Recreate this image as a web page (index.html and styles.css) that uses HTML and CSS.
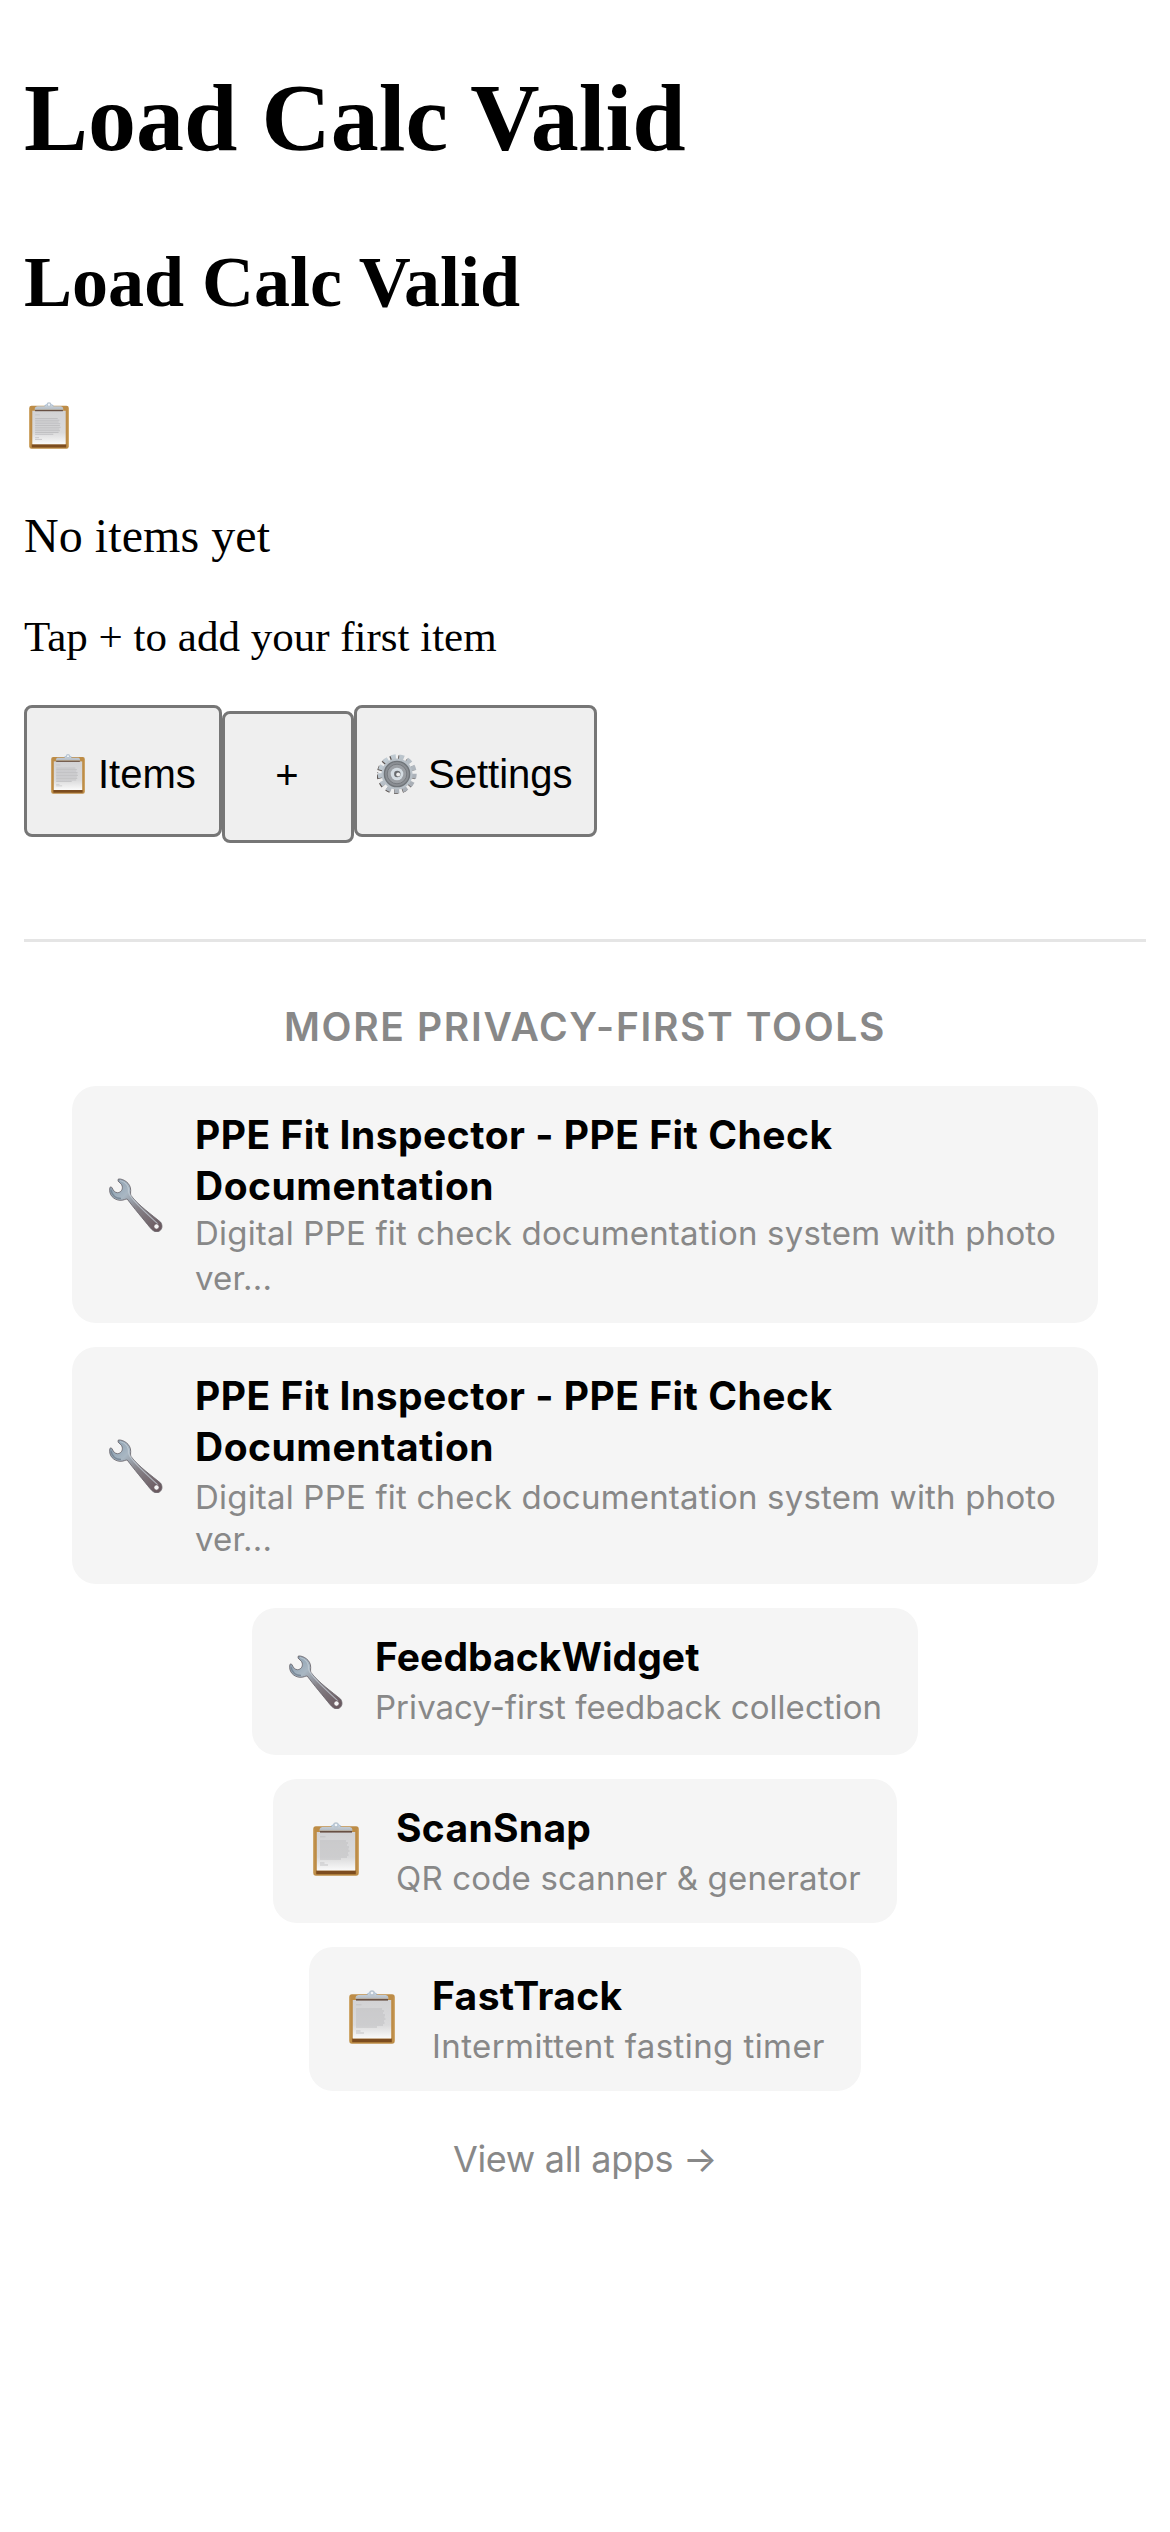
FILE: index.html
```html
<!DOCTYPE html>
<html lang="en">
<head>
<meta charset="utf-8">
<title>Load Calc Valid</title>
<link rel="stylesheet" href="styles.css">
</head>
<body>
<svg class="sprite" aria-hidden="true">
  <defs>
    <linearGradient id="paper" x1="0" y1="0" x2="0" y2="1"><stop offset="0" stop-color="#d2d2d4"/><stop offset=".65" stop-color="#dadadb"/><stop offset="1" stop-color="#fafafa"/></linearGradient>
    <linearGradient id="clip" x1="0" y1="0" x2="0" y2="1"><stop offset="0" stop-color="#c9d3dc"/><stop offset="1" stop-color="#b3bac2"/></linearGradient>
    <linearGradient id="steel" x1="0" y1="0" x2="1" y2="1"><stop offset="0" stop-color="#8499ab"/><stop offset=".3" stop-color="#a9b7c3"/><stop offset=".55" stop-color="#858187"/><stop offset="1" stop-color="#67545a"/></linearGradient>
    <linearGradient id="cog" x1="0" y1="0" x2="1" y2="1"><stop offset="0" stop-color="#c5d1d9"/><stop offset="1" stop-color="#a5a9b0"/></linearGradient>
    <symbol id="clipboard" viewBox="0 0 46 54" preserveAspectRatio="none">
      <rect x=".3" y="4.2" width="45.4" height="49.5" rx="2.6" fill="#bd8c46"/>
      <path d="M.8 7v44M45.2 7v44" stroke="#d0a562" stroke-width=".8"/>
      <path d="M3.2 48.6h39.6v3.6H3.2z" fill="#7c4c1f"/>
      <path d="M3.8 10h38.4v38.6H3.8z" fill="url(#paper)"/>
      <path d="M7 14.8h5.5M7 41h4.5M7 43h8" stroke="#c3c3c5" stroke-width="1"/>
      <path d="M7 19h26M7 21h28M7 23h27M7 25h29M7 27h28.5M7 29h29.5M7 31h28M7 33h28.5M7 35h27M7 37h21" stroke="#c0c0c2" stroke-width="1.2"/>
      <path d="M7 9.8h32" stroke="#685044" stroke-width="1.6"/>
      <path d="M6.500 8.800C6.500 5.700 8 5 10 5h8l2-1.500h6L28 5h8c2 0 3.500.7 3.500 3.800z" fill="url(#clip)"/>
      <circle cx="23" cy="3" r="2.1" fill="#f2f5f8" stroke="#b8c4d0" stroke-width="1.500"/>
      <path d="M18 4.600l2-2M28 4.600l-2-2" stroke="#83a9d2" stroke-width="1"/>
    </symbol>
    <symbol id="wrench" viewBox="0 0 54 54">
      <path d="M9.300 1C14 .4 22 5 21.700 12.500C21.600 14.500 21.300 16 22 17.500C29 27 43 37 51.500 44C54 47.500 53.300 52 49.500 53.500C46 54.500 43.500 52.500 41 49.500C35 42 24 29 18.200 21C16.500 20.800 15 22.500 11 22.300C5 22-.5 17 .8 10C1 8.500 2.500 8.500 3.200 10C4.500 13 6 14.500 8.500 14.700C12 14.500 14 11.500 13.200 8C12.500 5.500 10 4.500 9 3Z" fill="url(#steel)" stroke="#656066" stroke-width=".8"/>
      <path d="M11 2.500C17 4 20 8 19.500 14C21 20 34 32 49 46" fill="none" stroke="#c3ccd4" stroke-width="1.100" opacity=".75"/>
      <path d="M2 12C3 17 6 20.500 12 20.500" fill="none" stroke="#70808e" stroke-width="1.300" opacity=".8"/>
      <circle cx="47.500" cy="48.500" r="2.700" fill="#f5f5f5" stroke="#5b4a50" stroke-width=".8"/>
    </symbol>
    <symbol id="gear" viewBox="0 0 40 40">
      <circle cx="19.200" cy="20.600" r="17" fill="none" stroke="#5d5552" stroke-width="4.800" pathLength="26" stroke-dasharray="1 1"/>
      <circle cx="20.200" cy="19.800" r="17" fill="none" stroke="url(#cog)" stroke-width="5" pathLength="26" stroke-dasharray="1.150 .85"/>
      <circle cx="20" cy="20" r="15.500" fill="#b8c0c7"/>
      <circle cx="20" cy="20" r="12.600" fill="#8b8f94" stroke="#70757a" stroke-width="1.400"/>
      <circle cx="20" cy="20" r="9.800" fill="#9b9fa4" stroke="#777b80" stroke-width="1"/>
      <circle cx="20" cy="20" r="6.300" fill="#d4dce2"/>
      <circle cx="20.300" cy="20" r="3.200" fill="#686a6e"/>
      <circle cx="21.200" cy="20.400" r="2" fill="#eee"/>
    </symbol>
  </defs>
</svg>

<h1 class="app-title">Load Calc Valid</h1>
<h2 class="view-title">Load Calc Valid</h2>
<svg class="empty-icon"><use href="#clipboard"/></svg>
<p class="empty-title">No items yet</p>
<p class="empty-hint">Tap + to add your first item</p>

<nav class="tabs">
  <button class="tab tab-items"><svg class="tab-clipboard"><use href="#clipboard"/></svg>Items</button>
  <button class="tab tab-add">+</button>
  <button class="tab tab-settings"><svg class="tab-gear"><use href="#gear"/></svg>Settings</button>
</nav>

<footer class="more">
  <h3 class="more-title">MORE PRIVACY-FIRST TOOLS</h3>
  <div class="cards">
    <a class="card card-wide">
      <svg class="wrench"><use href="#wrench"/></svg>
      <div class="info">
        <div class="name">PPE Fit Inspector - PPE Fit Check Documentation</div>
        <div class="desc">Digital PPE fit check documentation system with photo ver...</div>
      </div>
    </a>
    <a class="card card-wide card-tight">
      <svg class="wrench"><use href="#wrench"/></svg>
      <div class="info">
        <div class="name">PPE Fit Inspector - PPE Fit Check Documentation</div>
        <div class="desc">Digital PPE fit check documentation system with photo ver...</div>
      </div>
    </a>
    <a class="card card-feedback">
      <svg class="wrench"><use href="#wrench"/></svg>
      <div class="info">
        <div class="name">FeedbackWidget</div>
        <div class="desc">Privacy-first feedback collection</div>
      </div>
    </a>
    <a class="card card-scan">
      <svg class="board"><use href="#clipboard"/></svg>
      <div class="info">
        <div class="name">ScanSnap</div>
        <div class="desc">QR code scanner &amp; generator</div>
      </div>
    </a>
    <a class="card card-fast">
      <svg class="board"><use href="#clipboard"/></svg>
      <div class="info">
        <div class="name">FastTrack</div>
        <div class="desc">Intermittent fasting timer</div>
      </div>
    </a>
  </div>
  <a class="all-apps">View all apps →</a>
</footer>
</body>
</html>
```
FILE: styles.css
```css
* { box-sizing: border-box; }
body { margin: 0; padding: 62px 24px 0; background: #fff; color: #000; font-family: "Liberation Serif", serif; }
svg { display: block; flex: none; }
.sprite { position: absolute; width: 0; height: 0; }
h1, h2, h3, p { margin: 0; }

.app-title { font-size: 96px; line-height: 111px; }
.view-title { margin-top: 68px; font-size: 72px; line-height: 82px; }
.empty-icon { width: 40px; height: 47px; margin: 79px 0 0 5px; }
.empty-title { margin-top: 60px; font-size: 48px; line-height: 54px; letter-spacing: 0.07px; }
.empty-hint { margin-top: 50px; font-size: 43px; line-height: 48px; }

.tabs { display: flex; align-items: flex-start; margin-top: 44px; }
.tab { display: flex; align-items: center; height: 132px; margin: 0; padding: 6px 0 0; border: 3px solid #767676; border-radius: 8px; background: #efefef; color: #000; font: 40px/46px "Liberation Sans", sans-serif; }
.tab-items { width: 198px; padding-left: 24px; }
.tab-add { width: 132px; margin-top: 6px; padding: 0 2px 4px 0; justify-content: center; }
.tab-settings { width: 243px; padding-left: 20px; }
.tab-clipboard { width: 34px; height: 40px; margin-right: 13px; }
.tab-gear { width: 40px; height: 40px; margin-right: 11px; }

.more { margin-top: 96px; padding: 60px 48px 0; border-top: 3px solid #e5e5e5; color: #888; font-family: Inter, sans-serif; text-align: center; }
.more-title { font-size: 39px; line-height: 49px; font-weight: 600; letter-spacing: 1.645px; }

.cards { display: flex; flex-direction: column; align-items: center; gap: 24px; margin-top: 35px; }
.card { display: flex; align-items: center; height: 144px; padding: 0 36px; border-radius: 24px; background: #f5f5f5; text-align: left; }
.wrench { width: 54px; height: 54px; margin: 0 32px 0 1px; }
.board { width: 46px; height: 54px; margin: 0 37px 4px 4px; }
.info { white-space: nowrap; }
.name { color: #000; font-size: 39px; line-height: 49px; font-weight: 700; letter-spacing: 0.3px; }
.desc { margin-top: 5px; font-size: 33px; line-height: 42px; letter-spacing: 0.16px; }

.card-wide { width: 1026px; height: 237px; padding-right: 30px; }
.card-wide .info { padding-top: 1px; white-space: normal; }
.card-wide .name { line-height: 51px; letter-spacing: 0.5px; }
.card-wide .desc { margin-top: 0; line-height: 45px; letter-spacing: 0.195px; }
.card-tight .info { padding: 0 0 1px; }
.card-tight .desc { margin-top: 4px; line-height: 42px; }
.card-feedback { width: 666px; height: 147px; }
.card-feedback .info { margin-bottom: 3px; }
.card-feedback .name { letter-spacing: 0.05px; }
.card-feedback .desc { letter-spacing: 0.04px; }
.card-scan { width: 624px; }
.card-fast { width: 552px; }
.card-fast .name { letter-spacing: 0.38px; }
.card-fast .desc { letter-spacing: 0.42px; }

.all-apps { display: block; margin-top: 46px; font-size: 36px; line-height: 44px; letter-spacing: -0.33px; }
```
